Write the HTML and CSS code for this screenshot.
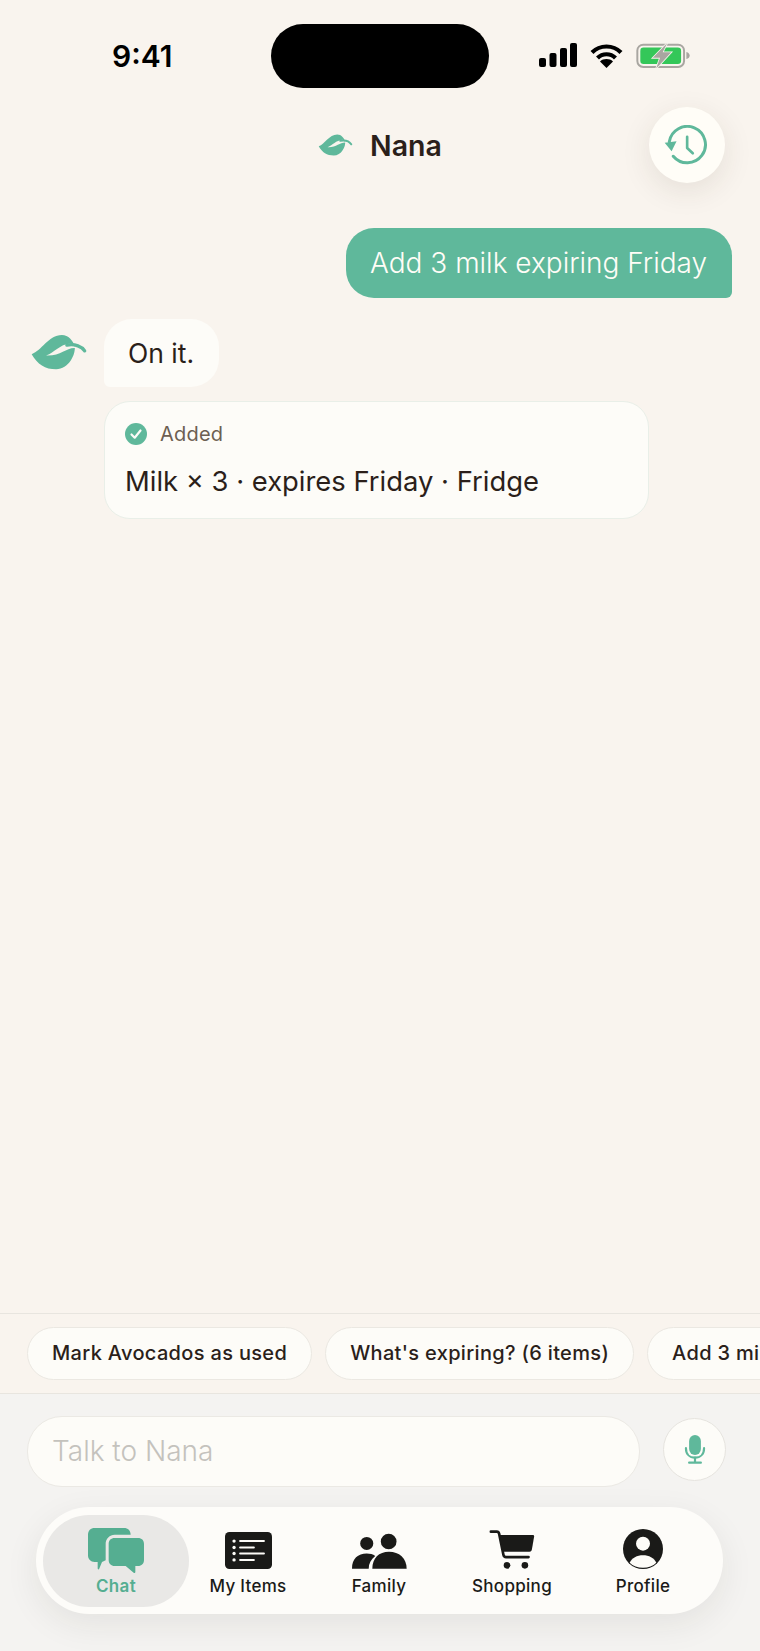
FILE: index.html
```html
<!doctype html>
<html>
<head>
<title>Nana</title>
<meta name=viewport content="width=device-width, initial-scale=1">
<link rel="stylesheet" href="styles.css">
</head>
<body>
<svg class="defs" width="0" height="0">
  <symbol id="leaf" viewBox="33 70 167 107">
    <path fill="#5fb89b" d="M35 130C65 120 85 73 125 73C145 73 158 90 163 105C168 130 145 175 108 175C75 175 52 160 35 130Z"/>
    <path fill="#f9f4ee" d="M78 134C104 124 118 101 150 98L170 112C140 106 125 136 78 134Z"/>
    <path fill="none" stroke="#5fb89b" stroke-width="10" stroke-linecap="round" d="M140 103C165 98 185 108 193 120"/>
  </symbol>
</svg>

<div class="page">
  <div class="status">
    <div class="time">9:41</div>
    <div class="island"></div>
    <div class="status-icons">
      <svg class="sig" viewBox="0 0 38 24" width="38" height="24" fill="#000">
        <rect x="0" y="15" width="7" height="9" rx="2"/>
        <rect x="10.500" y="10" width="7" height="14" rx="2"/>
        <rect x="21" y="5" width="7" height="19" rx="2"/>
        <rect x="31" y="0" width="7" height="24" rx="2"/>
      </svg>
      <svg class="wifi" viewBox="0 0 33 25" width="33" height="25" fill="none" stroke="#000" stroke-width="4.200">
        <path d="M2 9.500C10 1.500 23 1.500 31 9.500"/>
        <path d="M7.500 15C12.500 10 20.500 10 25.500 15"/>
        <path fill="#000" stroke="none" d="M16.500 25L10 18.500C13.500 15.300 19.500 15.300 23 18.500Z"/>
      </svg>
      <svg class="batt" viewBox="378 68 162 76" width="54" height="25">
        <rect x="381" y="73" width="142" height="68" rx="18" fill="none" stroke="#a9a6a1" stroke-width="6"/>
        <rect x="390" y="82" width="124" height="50" rx="10" fill="#34c759"/>
        <path d="M530 95C537 97 540 101 540 106C540 111 537 115 530 117Z" fill="#a9a6a1"/>
        <path d="M472 68L428 113H450L438 146L484 96H458Z" fill="#a9a6a1" stroke="#f9f4ee" stroke-width="5" paint-order="stroke"/>
      </svg>
    </div>
  </div>

  <header class="title-row">
    <svg class="title-leaf" width="35" height="22"><use href="#leaf"/></svg>
    <span class="title">Nana</span>
    <button class="history">
      <svg viewBox="460 315 130 120" width="43" height="40">
        <path d="M488 409A55 55 0 1 0 476 365" fill="none" stroke="#5fb89b" stroke-width="9" stroke-linecap="round"/>
        <path d="M462 368L498 364L483 394Z" fill="#5fb89b"/>
        <path d="M530 350V384L547 400" fill="none" stroke="#5fb89b" stroke-width="8" stroke-linecap="round" stroke-linejoin="round"/>
      </svg>
    </button>
  </header>

  <main class="chat">
    <div class="msg-user">Add 3 milk expiring Friday</div>
    <div class="msg-bot">
      <svg class="bot-leaf" width="56" height="36"><use href="#leaf"/></svg>
      <div class="bot-col">
        <div class="bubble-bot">On it.</div>
        <div class="card">
          <div class="card-head">
            <svg viewBox="0 0 22 22" width="22" height="22">
              <circle cx="11" cy="11" r="11" fill="#5fb89b"/>
              <path d="M6.500 11.500L9.700 14.700L15.500 7.500" fill="none" stroke="#fdfcf8" stroke-width="2.200" stroke-linecap="round" stroke-linejoin="round"/>
            </svg>
            <span>Added</span>
          </div>
          <div class="card-text">Milk × 3 · expires Friday · Fridge</div>
        </div>
      </div>
    </div>
  </main>

  <div class="suggestions">
    <div class="chip">Mark Avocados as used</div>
    <div class="chip">What's expiring? (6 items)</div>
    <div class="chip">Add 3 milk expiring Friday</div>
  </div>

  <div class="bottom">
    <div class="composer">
      <div class="input">Talk to Nana</div>
      <button class="mic">
        <svg viewBox="0 0 24 32" width="22" height="29" fill="none" stroke="#5fb89b" stroke-width="2.400" stroke-linecap="round">
          <rect x="5.500" y="0" width="13" height="22" rx="6.500" fill="#5fb89b" stroke="none"/>
          <path d="M2 14.500C2 21 6 25 12 25C18 25 22 21 22 14.500"/>
          <path d="M12 25V30.500M5.500 30.500H18.500"/>
        </svg>
      </button>
    </div>

    <nav class="tabs">
      <div class="tab active">
        <svg viewBox="205 108 168 135" width="56" height="45">
          <path fill="#55ae91" d="M225 108H313C325 108 333 116 333 128H285C270 128 258 140 258 155V205L247 210L238 232C235 233 234 231 234 228V210H225C213 210 205 202 205 190V128C205 116 213 108 225 108Z"/>
          <path fill="#55ae91" d="M285 138H355C366 138 373 145 373 156V204C373 215 366 222 355 222H347V240C347 243 344 244 342 242L318 222H285C274 222 267 215 267 204V156C267 145 274 138 285 138Z"/>
        </svg>
        <span>Chat</span>
      </div>
      <div class="tab">
        <svg viewBox="615 120 140 110" width="47" height="37">
          <rect x="615" y="120" width="140" height="110" rx="13" fill="#1a1a18"/>
          <g fill="#fdfcf8">
            <circle cx="642" cy="147" r="5"/><circle cx="642" cy="166" r="5"/><circle cx="642" cy="184" r="5"/><circle cx="642" cy="203" r="5"/>
          </g>
          <g stroke="#fdfcf8" stroke-width="6" stroke-linecap="round">
            <path d="M660 147H731M660 166H701M660 184H731M660 203H701"/>
          </g>
        </svg>
        <span>My Items</span>
      </div>
      <div class="tab">
        <svg viewBox="1000 122 168 108" width="55" height="36" fill="#1a1a18">
          <circle cx="1045" cy="153" r="20"/>
          <circle cx="1112" cy="147" r="24"/>
          <path d="M1000 230C1000 200 1018 184 1045 184C1055 184 1064 186 1071 191C1058 201 1051 214 1051 230Z"/>
          <path d="M1062 230C1062 198 1082 178 1113 178C1144 178 1167 198 1167 230Z"/>
        </svg>
        <span>Family</span>
      </div>
      <div class="tab">
        <svg viewBox="262 122 138 118" width="46" height="39">
          <path d="M267 127H285C289 127 291 129 292 133L305 197C306 202 308 204 313 204H381" fill="none" stroke="#1a1a18" stroke-width="8" stroke-linecap="round"/>
          <path d="M293 137H394C397 137 398 139 398 142L391 182C390 186 388 188 384 188H303Z" fill="#1a1a18"/>
          <circle cx="316" cy="229" r="10" fill="#1a1a18"/><circle cx="370" cy="229" r="10" fill="#1a1a18"/>
        </svg>
        <span>Shopping</span>
      </div>
      <div class="tab">
        <svg viewBox="673 117 120 120" width="40" height="40">
          <circle cx="733" cy="177" r="60" fill="#1a1a18"/>
          <circle cx="733" cy="161" r="21" fill="#fdfcf8"/>
          <path d="M693 218C700 204 715 196 733 196C751 196 766 204 773 218C763 228 749 233 733 233C717 233 703 228 693 218Z" fill="#fdfcf8"/>
        </svg>
        <span>Profile</span>
      </div>
    </nav>
  </div>
</div>
</body>
</html>
```

FILE: styles.css
```css
* {
    box-sizing: border-box;
}
body {
    margin: 0;
    background-color: #f9f4ee;
    color: #2b1f1a;
    font-family: Inter, "Liberation Sans", sans-serif;
}
svg {
    display: block;
}
button {
    padding: 0;
    font: inherit;
}
.defs {
    position: absolute;
}
.page {
    width: 760px;
    height: 1651px;
    overflow: hidden;
    display: flex;
    flex-direction: column;
}

/* status bar */
.status {
    height: 96px;
    padding-top: 24px;
    display: flex;
    align-items: flex-start;
}
.time {
    width: 271px;
    height: 64px;
    padding-left: 112px;
    color: #000;
    font-size: 30px;
    font-weight: 600;
    line-height: 64px;
}
.island {
    width: 218px;
    height: 64px;
    border-radius: 32px;
    background-color: #000;
}
.status-icons {
    height: 64px;
    margin-left: 50px;
    padding-top: 19px;
    display: flex;
    gap: 13px;
}

/* title */
.title-row {
    height: 98px;
    position: relative;
    display: flex;
    align-items: center;
    justify-content: center;
    gap: 17px;
}
.title {
    font-size: 28.500px;
    font-weight: 600;
    line-height: 36px;
    margin-top: 2px;
}
.history {
    position: absolute;
    left: 649px;
    top: 11px;
    width: 76px;
    height: 76px;
    padding-right: 4px;
    border: 0;
    border-radius: 50%;
    background-color: #fffdf7;
    box-shadow: 0 8px 30px rgba(60, 50, 30, 0.1);
    display: flex;
    align-items: center;
    justify-content: center;
}

/* messages */
.chat {
    flex: 1;
    padding: 34px 28px 0 31px;
}
.msg-user {
    width: 386px;
    height: 70px;
    margin-left: auto;
    padding-left: 24px;
    border-radius: 28px 28px 6px 28px;
    background-color: #5fb89b;
    color: #fffdf7;
    font-size: 28px;
    font-weight: 300;
    line-height: 71px;
    white-space: nowrap;
}
.msg-bot {
    margin-top: 21px;
    display: flex;
    gap: 17px;
}
.bot-leaf {
    margin-top: 15px;
}
.bot-col {
    display: flex;
    flex-direction: column;
    gap: 14px;
}
.bubble-bot {
    width: 115px;
    height: 68px;
    padding-left: 24px;
    border-radius: 28px 28px 28px 6px;
    background-color: #fdfcf8;
    font-size: 26.500px;
    line-height: 68px;
}
.card {
    width: 545px;
    height: 118px;
    padding: 20px 20px 0;
    border: 1px solid #e9efe8;
    border-radius: 26px;
    background-color: #fdfcf8;
}
.card-head {
    display: flex;
    align-items: center;
    gap: 13px;
    color: #6d5f52;
    font-size: 20px;
    letter-spacing: 0.2px;
}
.card-text {
    margin-top: 18px;
    font-size: 27.400px;
    white-space: nowrap;
}

/* suggestions */
.suggestions {
    height: 81px;
    padding: 13px 0 0 27px;
    border-top: 1px solid #e8e5df;
    border-bottom: 1px solid #e8e5df;
    display: flex;
    gap: 13px;
    overflow: hidden;
}
.chip {
    height: 53px;
    flex: none;
    padding: 0 24px;
    border: 1px solid #ebe8e2;
    border-radius: 27px;
    background-color: #fdfcf8;
    font-size: 20px;
    font-weight: 450;
    letter-spacing: 0.33px;
    line-height: 51px;
    white-space: nowrap;
}

/* composer and tabs */
.bottom {
    height: 257px;
    padding: 22px 37px 0 27px;
    background-color: #f4f3f1;
}
.composer {
    display: flex;
    align-items: center;
    gap: 23px;
}
.input {
    width: 613px;
    flex: none;
    height: 71px;
    padding-left: 24px;
    border: 1px solid #ebe9e4;
    border-radius: 35px;
    background-color: #fdfcf8;
    color: #c4c2bd;
    font-size: 28px;
    font-weight: 300;
    line-height: 69px;
}
.mic {
    width: 63px;
    height: 63px;
    flex: none;
    margin-top: -4px;
    border: 1px solid #e6e4df;
    border-radius: 50%;
    background-color: #fdfcf8;
    display: flex;
    align-items: center;
    justify-content: center;
}
.tabs {
    width: 687px;
    height: 107px;
    margin: 20px 0 0 9px;
    padding: 8px 7px;
    border-radius: 54px;
    background-color: #fdfcf9;
    box-shadow: 0 10px 34px rgba(40, 35, 30, 0.08);
    display: grid;
    grid-template-columns: 146px 118px 144px 122px 140px;
}
.tab {
    height: 92px;
    padding-bottom: 11px;
    display: flex;
    flex-direction: column;
    align-items: center;
    justify-content: flex-end;
    gap: 7px;
    color: #1a1a18;
    font-size: 17px;
    font-weight: 450;
    letter-spacing: 0.3px;
    white-space: nowrap;
}
.tab.active {
    border-radius: 46px;
    background-color: #e9e8e6;
    color: #55ae91;
    font-weight: 600;
    gap: 3px;
}
```
